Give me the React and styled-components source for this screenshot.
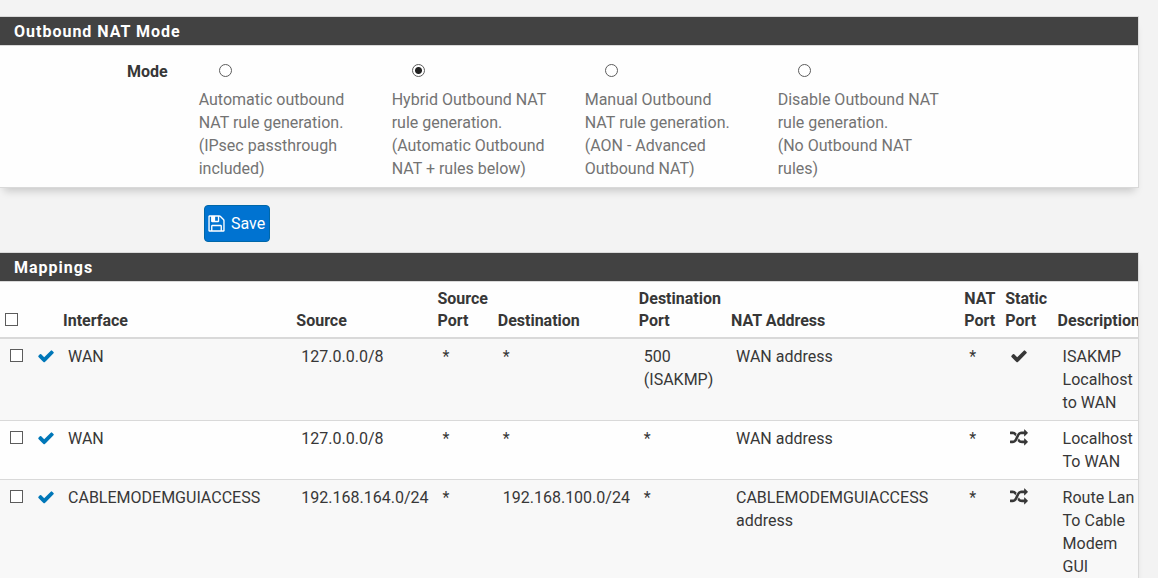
import React, { useState } from 'react';
import styled, { createGlobalStyle, css } from 'styled-components';

const GlobalStyle = createGlobalStyle`
  * {
    box-sizing: border-box;
  }

  body {
    margin: 0;
    background: #f3f3f3;
    color: #373737;
    font-family: Roboto, "Liberation Sans", sans-serif;
    font-size: 16px;
    line-height: 23px;
    overflow: hidden;
  }
`;

const Page = styled.main`
  padding: 16px 19px 0 0;
`;

const Panel = styled.section`
  background: #fefefe;
  border: 1px solid #d9d9d9;
  border-left: 0;
  box-shadow: 0 7px 8px -4px rgba(0, 0, 0, 0.18);
  overflow: hidden;
`;

const PanelHeading = styled.h2`
  margin: 0;
  padding: 3px 14px 2px;
  background: #424242;
  border-bottom: 1px solid #d9d9d9;
  color: #fff;
  font-size: 16px;
  font-weight: 700;
  line-height: 23px;
  letter-spacing: 1px;
`;

const ModeRow = styled.div`
  display: grid;
  grid-template-columns: 17.46% repeat(4, 16.96%);
  padding: 14px 0 7px;
`;

const ModeLabel = styled.span`
  padding-right: 31px;
  font-weight: 700;
  text-align: right;
`;

const ModeOption = styled.label`
  padding-right: 24px;
  color: #737373;
`;

const RadioLine = styled.span`
  display: flex;
  align-items: center;
  height: 21px;
  margin-bottom: 7px;
  padding-left: 20px;
`;

const HelpLine = styled.span`
  display: block;
`;

const box = css`
  appearance: none;
  display: block;
  width: 13px;
  height: 13px;
  margin: 0;
  border: 1px solid #5c5c5c;
  background: #fff;
`;

const Radio = styled.input.attrs({ type: 'radio' })`
  ${box}
  border-radius: 50%;

  &:checked {
    background: radial-gradient(circle, #222 3px, #fff 4px);
  }
`;

const Checkbox = styled.input.attrs({ type: 'checkbox' })`
  ${box}

  &:checked {
    background: #222;
    box-shadow: inset 0 0 0 2px #fff;
  }
`;

const Actions = styled.div`
  padding: 17px 0 10px 204px;
`;

const SaveButton = styled.button`
  display: flex;
  align-items: center;
  gap: 5px;
  height: 37px;
  padding: 0 4px 0 2px;
  background: #0073d1;
  border: 1px solid #0067a8;
  border-radius: 4px;
  color: #fff;
  font: inherit;
  cursor: pointer;

  &:hover {
    background: #005fae;
  }
`;

const Glyph = styled.svg`
  display: block;
  width: ${(props) => props.$size || 18}px;
  height: ${(props) => props.$size || 18}px;
  fill: ${(props) => props.$color || 'currentColor'};
`;

const MappingTable = styled.table`
  width: 100%;
  border-collapse: separate;
  border-spacing: 0;
  table-layout: fixed;
`;

const Col = styled.col`
  width: ${(props) => props.$width};
`;

const HeadCell = styled.th`
  padding: 6px 0 5px 5px;
  border-bottom: 2px solid #d9d9d9;
  font-weight: 700;
  line-height: 22px;
  text-align: left;
  vertical-align: bottom;

  ${Checkbox} {
    margin-bottom: 6px;
  }
`;

const Cell = styled.td`
  padding: 6px 0 6px ${(props) => (props.$tight ? '4px' : '10px')};
  vertical-align: top;

  ${Checkbox} {
    margin-top: 4px;
  }

  ${Glyph} {
    margin-top: 2px;
  }
`;

const Row = styled.tr`
  &:nth-child(odd) {
    background: #f8f8f8;
  }

  & + & ${Cell} {
    border-top: 1px solid #d9d9d9;
  }
`;

const icons = {
  check: 'M1671 566q0 40-28 68l-724 724-136 136q-28 28-68 28t-68-28l-136-136-362-362q-28-28-28-68t28-68l136-136q28-28 68-28t68 28l294 295 656-657q28-28 68-28t68 28l136 136q28 28 28 68z',
  random: 'M666 481q-60 92-137 273-22-45-37-72.5t-40.5-63.5-51-56.5-63-35-81.5-14.5h-224q-14 0-23-9t-9-23v-192q0-14 9-23t23-9h224q250 0 410 225zm1126 799q0 14-9 23l-320 320q-9 9-23 9-13 0-22.5-9.5t-9.5-22.5v-192q-32 0-85 .5t-81 1-73-1-71-5-64-10.5-63-18.5-58-28.5-59-40-55-53.5-56-69.5q59-93 136-273 22 45 37 72.5t40.5 63.5 51 56.5 63 35 81.5 14.5h256v-192q0-14 9-23t23-9q12 0 24 10l319 319q9 9 9 23zm0-896q0 14-9 23l-320 320q-9 9-23 9-13 0-22.5-9.5t-9.5-22.5v-192h-256q-48 0-87 15t-69 45-51 61.5-45 77.5q-32 62-78 171-29 66-49.5 111t-54 105-64 100-74 83-90 68.5-106.5 42-128 16.5h-224q-14 0-23-9t-9-23v-192q0-14 9-23t23-9h224q48 0 87-15t69-45 51-61.5 45-77.5q32-62 78-171 29-66 49.5-111t54-105 64-100 74-83 90-68.5 106.5-42 128-16.5h256v-192q0-14 9-23t23-9q12 0 24 10l319 319q9 9 9 23z',
  save: 'M512 1536h768v-384h-768v384zm896 0h128v-896q0-14-10-38.5t-20-34.5l-281-281q-10-10-34-20t-39-10v416q0 40-28 68t-68 28h-576q-40 0-68-28t-28-68v-416h-128v1280h128v-416q0-40 28-68t68-28h832q40 0 68 28t28 68v416zm-384-928v-320q0-13-9.5-22.5t-22.5-9.5h-192q-13 0-22.5 9.5t-9.5 22.5v320q0 13 9.5 22.5t22.5 9.5h192q13 0 22.5-9.5t9.5-22.5zm640 32v928q0 40-28 68t-68 28h-1344q-40 0-68-28t-28-68v-1344q0-40 28-68t68-28h928q40 0 88 20t76 48l280 280q28 28 48 76t20 88z',
};

const Icon = ({ name, color, size }) => (
  <Glyph viewBox="0 0 1792 1792" $color={color} $size={size} aria-hidden="true">
    <path d={icons[name]} />
  </Glyph>
);

const modes = [
  { id: 'automatic', lines: ['Automatic outbound NAT rule generation.', '(IPsec passthrough included)'] },
  { id: 'hybrid', lines: ['Hybrid Outbound NAT rule generation.', '(Automatic Outbound NAT + rules below)'] },
  { id: 'advanced', lines: ['Manual Outbound NAT\u00a0rule generation.', '(AON - Advanced Outbound NAT)'] },
  { id: 'disabled', lines: ['Disable Outbound NAT rule generation.', '(No Outbound NAT rules)'] },
];

const widths = ['2.9%', '2.2%', '20.5%', '12.4%', '5.3%', '12.4%', '8.1%', '20.5%', '3.6%', '4.6%', '7.5%'];

const headings = [
  'Interface', 'Source', 'Source Port', 'Destination', 'Destination Port',
  'NAT Address', 'NAT Port', 'Static Port', 'Description',
];

const mappings = [
  {
    iface: 'WAN',
    source: '127.0.0.0/8',
    destination: '*',
    destinationPort: '500 (ISAKMP)',
    address: 'WAN address',
    icon: 'check',
    description: 'ISAKMP Localhost to WAN',
  },
  {
    iface: 'WAN',
    source: '127.0.0.0/8',
    destination: '*',
    destinationPort: '*',
    address: 'WAN address',
    icon: 'random',
    description: 'Localhost To WAN',
  },
  {
    iface: 'CABLEMODEMGUIACCESS',
    source: '192.168.164.0/24',
    destination: '192.168.100.0/24',
    destinationPort: '*',
    address: 'CABLEMODEMGUIACCESS address',
    icon: 'random',
    description: 'Route Lan To Cable Modem GUI',
  },
];

const App = () => {
  const [mode, setMode] = useState('hybrid');

  return (
    <Page>
      <GlobalStyle />
      <Panel>
        <PanelHeading>Outbound NAT Mode</PanelHeading>
        <ModeRow role="radiogroup" aria-labelledby="mode-label">
          <ModeLabel id="mode-label">Mode</ModeLabel>
          {modes.map(({ id, lines }) => (
            <ModeOption key={id}>
              <RadioLine>
                <Radio name="mode" value={id} checked={mode === id} onChange={() => setMode(id)} />
              </RadioLine>
              {lines.map((line) => <HelpLine key={line}>{line}</HelpLine>)}
            </ModeOption>
          ))}
        </ModeRow>
      </Panel>

      <Actions>
        <SaveButton type="button">
          <Icon name="save" size={19} />
          Save
        </SaveButton>
      </Actions>

      <Panel>
        <PanelHeading>Mappings</PanelHeading>
        <MappingTable>
          <colgroup>
            {widths.map((width, i) => <Col key={i} $width={width} />)}
          </colgroup>
          <thead>
            <tr>
              <HeadCell><Checkbox aria-label="Select all" /></HeadCell>
              <HeadCell />
              {headings.map((heading) => <HeadCell key={heading}>{heading}</HeadCell>)}
            </tr>
          </thead>
          <tbody>
            {mappings.map((row, i) => (
              <Row key={i}>
                <Cell><Checkbox aria-label={`Select mapping ${i + 1}`} /></Cell>
                <Cell $tight><Icon name="check" color="#0077b8" /></Cell>
                <Cell>{row.iface}</Cell>
                <Cell>{row.source}</Cell>
                <Cell>*</Cell>
                <Cell>{row.destination}</Cell>
                <Cell>{row.destinationPort}</Cell>
                <Cell>{row.address}</Cell>
                <Cell>*</Cell>
                <Cell><Icon name={row.icon} /></Cell>
                <Cell>{row.description}</Cell>
              </Row>
            ))}
          </tbody>
        </MappingTable>
      </Panel>
    </Page>
  );
};

export default App;
